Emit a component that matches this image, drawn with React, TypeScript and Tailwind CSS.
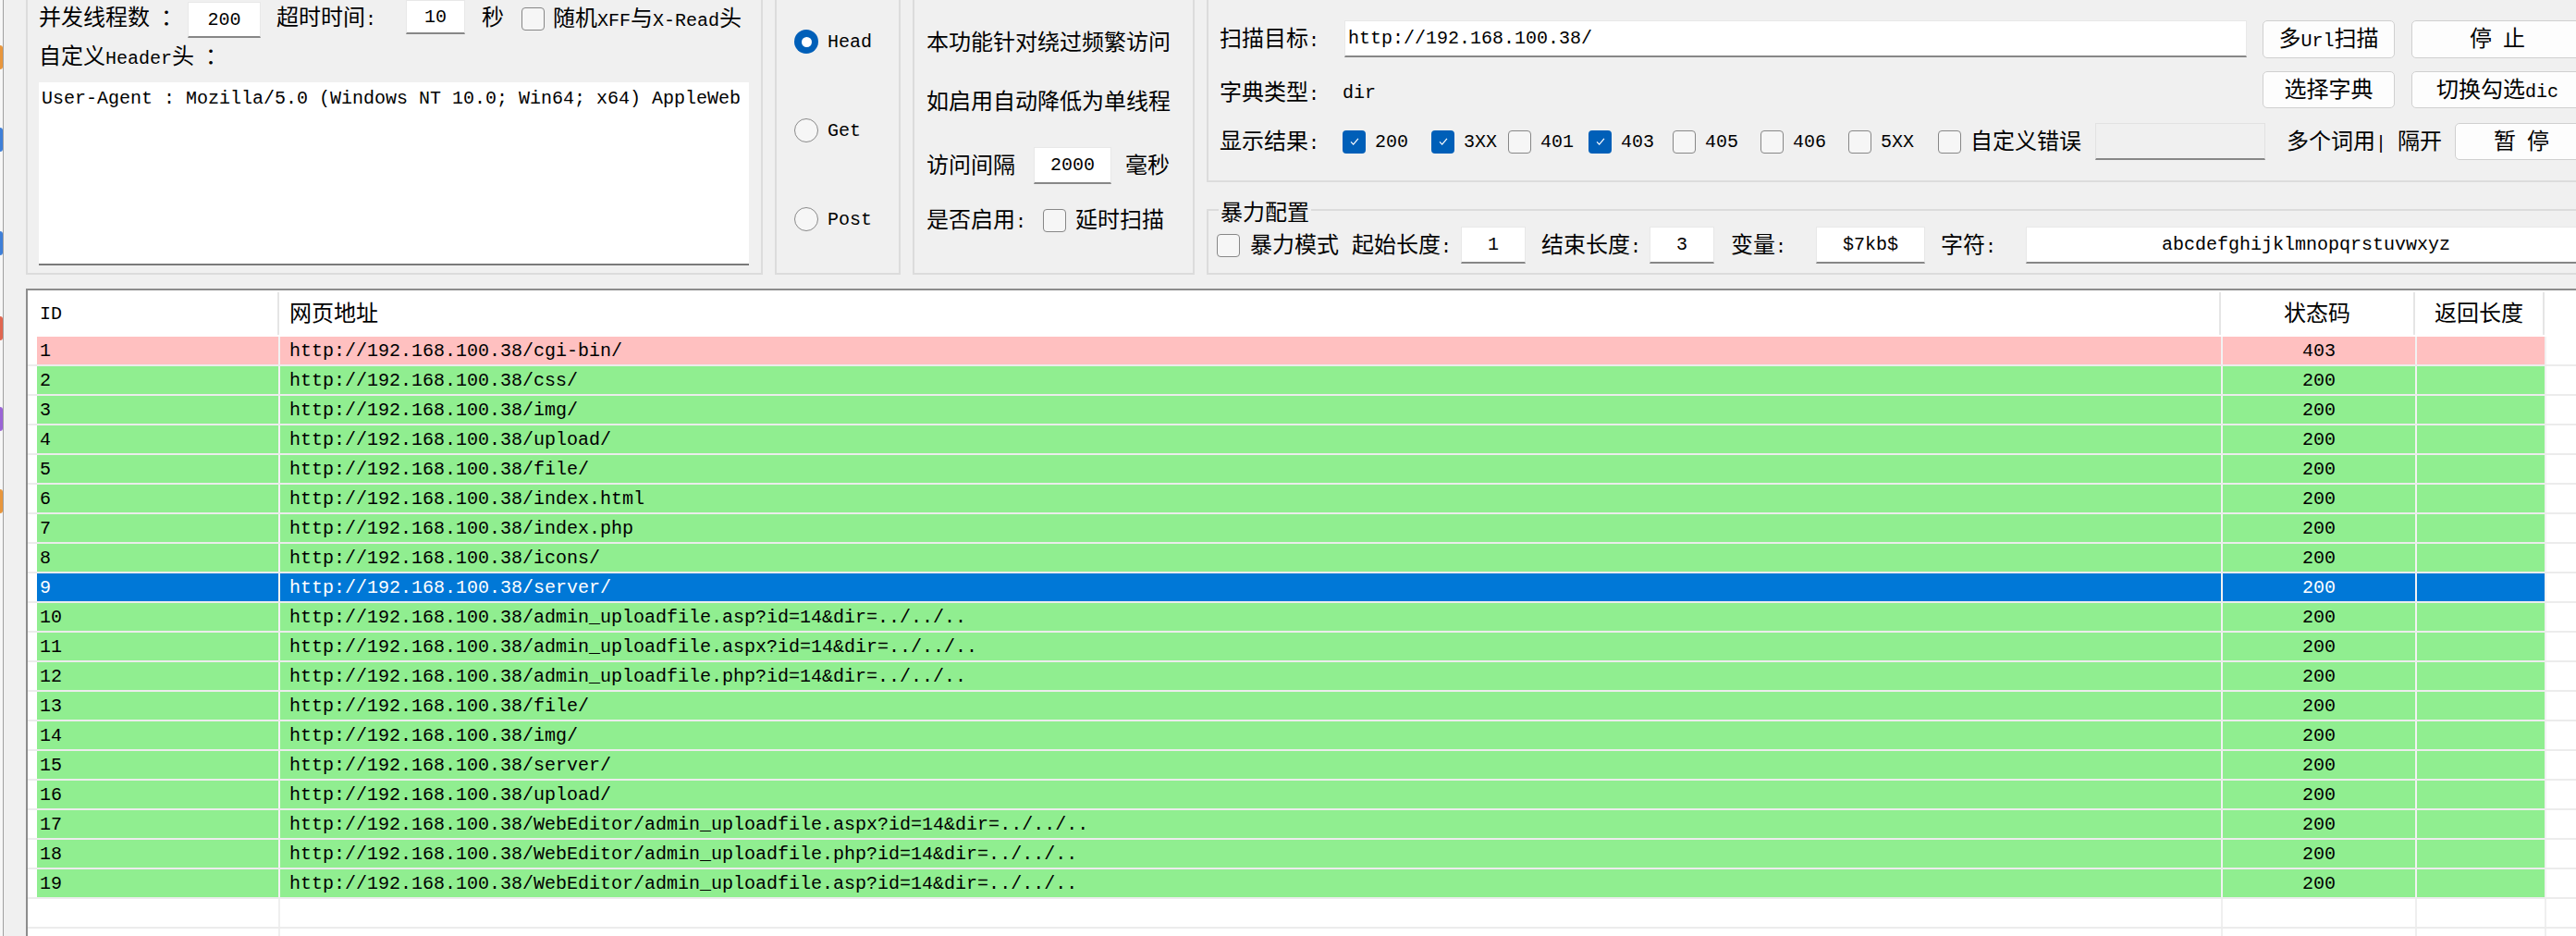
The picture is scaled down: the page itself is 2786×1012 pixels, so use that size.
import React from "react";

const CJK_RE = /[\u2E80-\u9FFF\uF900-\uFAFF\uFF00-\uFFEF\u3000-\u303F]/;
const SPLIT_RE = /[\u2E80-\u9FFF\uF900-\uFAFF\uFF00-\uFFEF\u3000-\u303F]+|[^\u2E80-\u9FFF\uF900-\uFAFF\uFF00-\uFFEF\u3000-\u303F]+/g;

function T({ s, className = "" }: { s: string; className?: string }) {
  const parts = s.match(SPLIT_RE) ?? [];
  return (
    <span className={`whitespace-pre leading-[30px] ${className}`}>
      {parts.map((p, i) =>
        CJK_RE.test(p) ? (
          <span key={i} className="inline-block font-['Noto_Sans_CJK_SC',sans-serif] text-[24px] leading-[30px]">
            {p}
          </span>
        ) : (
          <span key={i} className="inline-block font-['Liberation_Mono',monospace] text-[20px] leading-[30px]">
            {p}
          </span>
        )
      )}
    </span>
  );
}

function Check({ checked = false }: { checked?: boolean }) {
  return checked ? (
    <span className="flex h-[25px] w-[25px] shrink-0 items-center justify-center rounded-[4px] bg-[#005fb8]">
      <svg width="14" height="14" viewBox="0 0 16 16">
        <path d="M3.5 8.5 L6.5 11.5 L12.5 4.5" fill="none" stroke="white" strokeWidth="1.4" />
      </svg>
    </span>
  ) : (
    <span className="block h-[25px] w-[25px] shrink-0 rounded-[4px] border-[1.5px] border-[#878787] bg-[#f6f6f6]" />
  );
}

function Radio({ checked = false }: { checked?: boolean }) {
  return checked ? (
    <span className="flex h-[26px] w-[26px] shrink-0 items-center justify-center rounded-full bg-[#005fb8]">
      <span className="block h-[11px] w-[11px] rounded-full bg-white" />
    </span>
  ) : (
    <span className="block h-[26px] w-[26px] shrink-0 rounded-full border-[1.5px] border-[#8a8a8a] bg-[#f6f6f6]" />
  );
}

function Btn({ label, className = "" }: { label: string; className?: string }) {
  return (
    <div
      className={`flex shrink-0 items-center justify-center rounded-[5px] border border-[#d0d0d0] bg-[#fdfdfd] ${className}`}
    >
      <T s={label} />
    </div>
  );
}

type Row = { id: number; url: string; code: string; kind: "pink" | "green" | "sel" };

const base = "http://192.168.100.38/";
const paths = [
  "cgi-bin/",
  "css/",
  "img/",
  "upload/",
  "file/",
  "index.html",
  "index.php",
  "icons/",
  "server/",
  "admin_uploadfile.asp?id=14&dir=../../..",
  "admin_uploadfile.aspx?id=14&dir=../../..",
  "admin_uploadfile.php?id=14&dir=../../..",
  "file/",
  "img/",
  "server/",
  "upload/",
  "WebEditor/admin_uploadfile.aspx?id=14&dir=../../..",
  "WebEditor/admin_uploadfile.php?id=14&dir=../../..",
  "WebEditor/admin_uploadfile.asp?id=14&dir=../../..",
];

const rows: Row[] = paths.map((p, i) => ({
  id: i + 1,
  url: base + p,
  code: i === 0 ? "403" : "200",
  kind: i === 0 ? "pink" : i === 8 ? "sel" : "green",
}));

const statusItems: { label: string; checked: boolean; w: string }[] = [
  { label: "200", checked: true, w: "w-[96px]" },
  { label: "3XX", checked: true, w: "w-[83px]" },
  { label: "401", checked: false, w: "w-[87px]" },
  { label: "403", checked: true, w: "w-[91px]" },
  { label: "405", checked: false, w: "w-[95px]" },
  { label: "406", checked: false, w: "w-[95px]" },
  { label: "5XX", checked: false, w: "w-[97px]" },
  { label: "自定义错误", checked: false, w: "w-[170px]" },
];

const inputCls = "shrink-0 bg-white border border-[#e8e8e8] border-b-2 border-b-[#878787]";

export default function App() {
  return (
    <div className="flex h-[1012px] w-[2786px] overflow-hidden bg-[#f0f0f0] text-black">
      {/* desktop edge strip */}
      <div className="flex w-[3px] shrink-0 flex-col bg-[#f7f7f7]">
        <span className="mt-[49px] block h-[26px] w-[3px] rounded-r-full bg-[#e8963c]" />
        <span className="mt-[63px] block h-[26px] w-[3px] rounded-r-full bg-[#3e7fd8]" />
        <span className="mt-[86px] block h-[26px] w-[3px] rounded-r-full bg-[#3e7fd8]" />
        <span className="mt-[66px] block h-[26px] w-[3px] rounded-r-full bg-[#e06650]" />
        <span className="mt-[72px] block h-[26px] w-[3px] rounded-r-full bg-[#9a64d6]" />
        <span className="mt-[63px] block h-[26px] w-[3px] rounded-r-full bg-[#e8963c]" />
      </div>
      <div className="w-[1px] shrink-0 bg-[#a0a0a0]" />

      <div className="flex min-w-0 flex-1 flex-col">
        {/* top controls */}
        <div className="flex h-[297px] shrink-0">
          {/* left group */}
          <div className="ml-[24px] flex h-[297px] w-[797px] shrink-0 flex-col border-2 border-t-0 border-[#dcdcdc] pl-[12px]">
            <div className="flex h-[42px] items-start">
              <div className="flex h-[39px] w-[161px] shrink-0 items-center">
                <T s="并发线程数 ：" />
              </div>
              <div className={`mt-[2px] flex h-[39px] w-[79px] items-center justify-center ${inputCls}`}>
                <T s="200" />
              </div>
              <div className="ml-[17px] flex h-[38px] w-[140px] shrink-0 items-center">
                <T s="超时时间:" />
              </div>
              <div className={`flex h-[37px] w-[64px] items-center justify-center ${inputCls}`}>
                <T s="10" />
              </div>
              <div className="ml-[18px] flex h-[38px] w-[43px] shrink-0 items-center">
                <T s="秒" />
              </div>
              <div className="flex h-[40px] items-center">
                <Check />
              </div>
              <div className="ml-[9px] flex h-[40px] items-center">
                <T s="随机XFF与X-Read头" />
              </div>
            </div>
            <div className="flex h-[47px] items-center pb-[8px]">
              <T s="自定义Header头 ：" />
            </div>
            <div className="h-[198px] w-[768px] overflow-hidden whitespace-nowrap border-b-2 border-[#7a7a7a] bg-white pl-[3px] pt-[2px]">
              <T s="User-Agent : Mozilla/5.0 (Windows NT 10.0; Win64; x64) AppleWeb" />
            </div>
          </div>

          {/* method radio group */}
          <div className="ml-[13px] flex h-[297px] w-[136px] shrink-0 flex-col border-2 border-t-0 border-[#dcdcdc] pl-[19px] pt-[29px]">
            <div className="flex h-[32px] items-center gap-[10px]">
              <Radio checked />
              <T s="Head" />
            </div>
            <div className="mt-[64px] flex h-[32px] items-center gap-[10px]">
              <Radio />
              <T s="Get" />
            </div>
            <div className="mt-[64px] flex h-[32px] items-center gap-[10px]">
              <Radio />
              <T s="Post" />
            </div>
          </div>

          {/* delay group */}
          <div className="ml-[13px] flex h-[297px] w-[305px] shrink-0 flex-col border-2 border-t-0 border-[#dcdcdc] pl-[13px]">
            <div className="mt-[30px] flex h-[32px] items-center">
              <T s="本功能针对绕过频繁访问" />
            </div>
            <div className="mt-[32px] flex h-[32px] items-center">
              <T s="如启用自动降低为单线程" />
            </div>
            <div className="mt-[33px] flex h-[40px] items-center">
              <div className="w-[116px] shrink-0">
                <T s="访问间隔" />
              </div>
              <div className={`flex h-[40px] w-[84px] items-center justify-center ${inputCls}`}>
                <T s="2000" />
              </div>
              <div className="ml-[15px]">
                <T s="毫秒" />
              </div>
            </div>
            <div className="mt-[23px] flex h-[32px] items-center">
              <div className="w-[126px] shrink-0">
                <T s="是否启用:" />
              </div>
              <Check />
              <div className="ml-[10px]">
                <T s="延时扫描" />
              </div>
            </div>
          </div>

          {/* scan target + brute */}
          <div className="ml-[13px] flex w-[1500px] shrink-0 flex-col">
            <div className="flex h-[197px] shrink-0 flex-col border-2 border-t-0 border-[#dcdcdc] pl-[12px]">
              <div className="mt-[21px] flex h-[42px] items-center">
                <div className="w-[135px] shrink-0">
                  <T s="扫描目标:" />
                </div>
                <div className={`flex h-[40px] w-[976px] items-center pl-[3px] ${inputCls}`}>
                  <T s="http://192.168.100.38/" />
                </div>
                <Btn label="多Url扫描" className="ml-[17px] h-[41px] w-[143px]" />
                <Btn label="停 止" className="ml-[18px] h-[41px] w-[186px]" />
              </div>
              <div className="mt-[14px] flex h-[40px] items-center">
                <div className="w-[133px] shrink-0 pt-[6px]">
                  <T s="字典类型:" />
                </div>
                <div className="w-[995px] shrink-0 pt-[6px]">
                  <T s="dir" />
                </div>
                <Btn label="选择字典" className="h-[40px] w-[143px]" />
                <Btn label="切换勾选dic" className="ml-[18px] h-[40px] w-[186px]" />
              </div>
              <div className="mt-[16px] flex h-[40px] items-center">
                <div className="w-[133px] shrink-0">
                  <T s="显示结果:" />
                </div>
                {statusItems.map((it) => (
                  <div key={it.label} className={`flex shrink-0 items-center gap-[10px] ${it.w}`}>
                    <Check checked={it.checked} />
                    <T s={it.label} />
                  </div>
                ))}
                <div className="h-[40px] w-[184px] shrink-0 border border-[#e2e2e2] border-b-2 border-b-[#878787] bg-[#f0f0f0]" />
                <div className="ml-[23px] w-[182px] shrink-0">
                  <T s="多个词用| 隔开" />
                </div>
                <Btn label="暂 停" className="h-[40px] w-[144px]" />
              </div>
            </div>

            <fieldset className="mt-[16px] h-[84px] border-2 border-[#dcdcdc]">
              <legend className="ml-[11px] h-[28px] px-[2px] leading-[28px]">
                <T s="暴力配置" className="leading-[28px]" />
              </legend>
              <div className="mt-[4px] flex h-[40px] items-center pl-[9px]">
                <Check />
                <div className="ml-[11px] w-[110px] shrink-0">
                  <T s="暴力模式" />
                </div>
                <div className="w-[118px] shrink-0">
                  <T s="起始长度:" />
                </div>
                <div className={`flex h-[40px] w-[70px] items-center justify-center ${inputCls}`}>
                  <T s="1" />
                </div>
                <div className="ml-[17px] w-[117px] shrink-0">
                  <T s="结束长度:" />
                </div>
                <div className={`flex h-[40px] w-[70px] items-center justify-center ${inputCls}`}>
                  <T s="3" />
                </div>
                <div className="ml-[18px] w-[92px] shrink-0">
                  <T s="变量:" />
                </div>
                <div className={`flex h-[40px] w-[118px] items-center justify-center ${inputCls}`}>
                  <T s="$7kb$" />
                </div>
                <div className="ml-[17px] w-[92px] shrink-0">
                  <T s="字符:" />
                </div>
                <div className={`flex h-[40px] w-[606px] items-center justify-center ${inputCls}`}>
                  <T s="abcdefghijklmnopqrstuvwxyz" />
                </div>
              </div>
            </fieldset>
          </div>
        </div>

        {/* results list */}
        <div className="ml-[24px] mt-[15px] w-[2780px] shrink-0 border-l-2 border-t-2 border-[#8c8c8c] bg-white">
          <div className="flex h-[50px]">
            <div className="flex w-[270px] shrink-0 items-center pl-[13px]">
              <T s="ID" />
            </div>
            <div className="my-[2px] w-[2px] shrink-0 bg-[#e5e5e5]" />
            <div className="flex w-[2098px] shrink-0 items-center pl-[11px]">
              <T s="网页地址" />
            </div>
            <div className="my-[2px] w-[2px] shrink-0 bg-[#e5e5e5]" />
            <div className="flex w-[208px] shrink-0 items-center justify-center">
              <T s="状态码" />
            </div>
            <div className="my-[2px] w-[2px] shrink-0 bg-[#e5e5e5]" />
            <div className="flex w-[138px] shrink-0 items-center justify-center">
              <T s="返回长度" />
            </div>
            <div className="my-[2px] w-[2px] shrink-0 bg-[#e5e5e5]" />
          </div>

          {rows.map((r) => {
            const bg =
              r.kind === "pink"
                ? "bg-[#ffc0c0]"
                : r.kind === "sel"
                ? "bg-[#0078d7] text-white"
                : "bg-[#90ee90]";
            return (
              <div key={r.id} className="flex h-[32px] border-b-2 border-[#ececec]">
                <div className="w-[10px] shrink-0" />
                <div className={`flex w-[261px] shrink-0 items-center pl-[3px] ${bg}`}>
                  <T s={String(r.id)} />
                </div>
                <div className="w-[2px] shrink-0 bg-[#f2f2f2]" />
                <div className={`flex w-[2099px] shrink-0 items-center pl-[10px] ${bg}`}>
                  <T s={r.url} />
                </div>
                <div className="w-[2px] shrink-0 bg-[#f2f2f2]" />
                <div className={`flex w-[208px] shrink-0 items-center justify-center ${bg}`}>
                  <T s={r.code} />
                </div>
                <div className="w-[2px] shrink-0 bg-[#f2f2f2]" />
                <div className={`w-[138px] shrink-0 ${bg}`} />
                <div className="w-[2px] shrink-0 bg-[#f2f2f2]" />
              </div>
            );
          })}

          {[0, 1].map((k) => (
            <div key={k} className="flex h-[32px] border-b-2 border-[#ececec]">
              <div className="w-[271px] shrink-0" />
              <div className="w-[2px] shrink-0 bg-[#efefef]" />
              <div className="w-[2099px] shrink-0" />
              <div className="w-[2px] shrink-0 bg-[#efefef]" />
              <div className="w-[208px] shrink-0" />
              <div className="w-[2px] shrink-0 bg-[#efefef]" />
              <div className="w-[138px] shrink-0" />
              <div className="w-[2px] shrink-0 bg-[#efefef]" />
            </div>
          ))}
        </div>
      </div>
    </div>
  );
}
